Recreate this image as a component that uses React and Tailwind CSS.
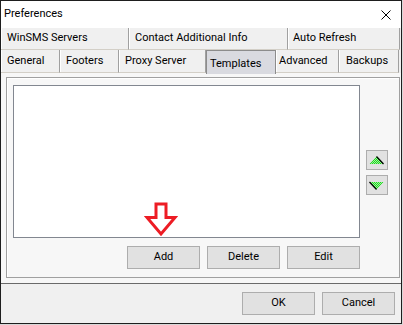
import React from 'react';

const Tab = ({ label, w, pl = 'pl-[6px]', last }) => (
  <div className={`${w} ${pl} h-full flex items-center bg-[#f0f0f0] border-b border-[#d3cfc7] ${last ? '' : 'border-r border-r-[#a0a0a0]'} shadow-[inset_1px_0_0_#ffffff] whitespace-nowrap`}>
    {label}
  </div>
);

const Btn = ({ children, w = 'w-[73px]' }) => (
  <button className={`${w} h-[23px] bg-[#e1e1e1] border border-[#adadad] text-[11px] text-black flex items-center justify-center`}>
    {children}
  </button>
);

const Pattern = () => (
  <defs>
    <pattern id="dots" width="2" height="2" patternUnits="userSpaceOnUse">
      <rect width="2" height="2" fill="#9cf09c" />
      <rect width="1" height="1" fill="#1ed81e" />
      <rect x="1" y="1" width="1" height="1" fill="#1ed81e" />
    </pattern>
  </defs>
);

export default function App() {
  return (
    <div className="w-[403px] h-[325px] bg-[#d8d8d8] font-['Roboto',sans-serif] text-[11px] text-black">
      <div className="w-[402px] h-[324px] border border-[#1e1e1e] flex flex-col bg-[#f0f0f0]">
        {/* title bar */}
        <div className="h-[27px] bg-white flex items-center justify-between pl-[3px] pr-[10px]">
          <span>Preferences</span>
          <svg width="10" height="10" viewBox="0 0 10 10">
            <path d="M0.5 0.5 L9.5 9.5 M9.5 0.5 L0.5 9.5" stroke="#000" strokeWidth="1" fill="none" />
          </svg>
        </div>

        {/* tab rows */}
        <div className="h-[22px] flex bg-[#f0f0f0]">
          <Tab label="WinSMS Servers" w="w-[128px]" />
          <Tab label="Contact Additional Info" w="w-[159px]" />
          <Tab label="Auto Refresh" w="w-[112px]" pl="pl-[5px]" />
        </div>
        <div className="h-[23px] flex bg-[#f0f0f0]">
          <Tab label="General" w="w-[59px]" />
          <Tab label="Footers" w="w-[59px]" />
          <Tab label="Proxy Server" w="w-[87px]" />
          <div className="w-[70px] h-[24px] pl-[3px] pt-[5px] bg-[#d9dae0] border border-b-0 border-[#8c8c8c] whitespace-nowrap relative z-10">
            Templates
          </div>
          <Tab label="Advanced" w="w-[63px]" pl="pl-[3px]" />
          <Tab label="Backups" w="w-[60px]" pl="pl-[7px]" />
        </div>

        {/* tab page */}
        <div className="flex-1 bg-[#f7f7f7] pt-[4px] pl-[5px] pr-[1px] pb-[5px]">
          <div className="h-full border border-[#a0a0a0] shadow-[inset_1px_1px_0_#ffffff] flex pt-[7px] pl-[6px] relative">
            <div className="w-[347px] flex flex-col">
              <div className="h-[153px] bg-white border border-[#828790]" />
              <div className="mt-[8px] flex justify-end gap-[7px]">
                <Btn>Add</Btn>
                <Btn>Delete</Btn>
                <Btn>Edit</Btn>
              </div>
            </div>
            <div className="ml-[6px] pt-[65px] flex flex-col gap-[5px]">
              <button className="w-[22px] h-[20px] bg-[#e1e1e1] border border-[#adadad] flex items-center justify-center">
                <svg width="16" height="9" viewBox="0 0 16 9">
                  <Pattern />
                  <polygon points="0.5,8 7.5,0.5 14.5,8" fill="url(#dots)" />
                  <path d="M7.5 0.5 L14.5 8" stroke="#000" strokeWidth="1.2" />
                </svg>
              </button>
              <button className="w-[22px] h-[20px] bg-[#e1e1e1] border border-[#adadad] flex items-center justify-center">
                <svg width="16" height="9" viewBox="0 0 16 9">
                  <polygon points="0.5,1 14.5,1 7.5,8.5" fill="url(#dots)" />
                  <path d="M0.5 1 L7.5 8.5" stroke="#000" strokeWidth="1.2" />
                </svg>
              </button>
            </div>

            {/* red pointer arrow */}
            <svg className="absolute left-[137px] top-[124px]" width="34" height="36" viewBox="0 0 34 36">
              <polygon
                points="12,2 22,2 22,15.5 31,15.5 17,32 3,15.5 12,15.5"
                fill="#ffffff"
                stroke="#ed1c24"
                strokeWidth="3"
                strokeLinejoin="miter"
              />
            </svg>
          </div>
        </div>

        {/* dialog buttons */}
        <div className="h-[40px] border-t border-[#6a6a6a] bg-[#f0f0f0] flex justify-end items-start gap-[7px] pt-[8px] pr-[6px]">
          <Btn>OK</Btn>
          <Btn>Cancel</Btn>
        </div>
      </div>
    </div>
  );
}
